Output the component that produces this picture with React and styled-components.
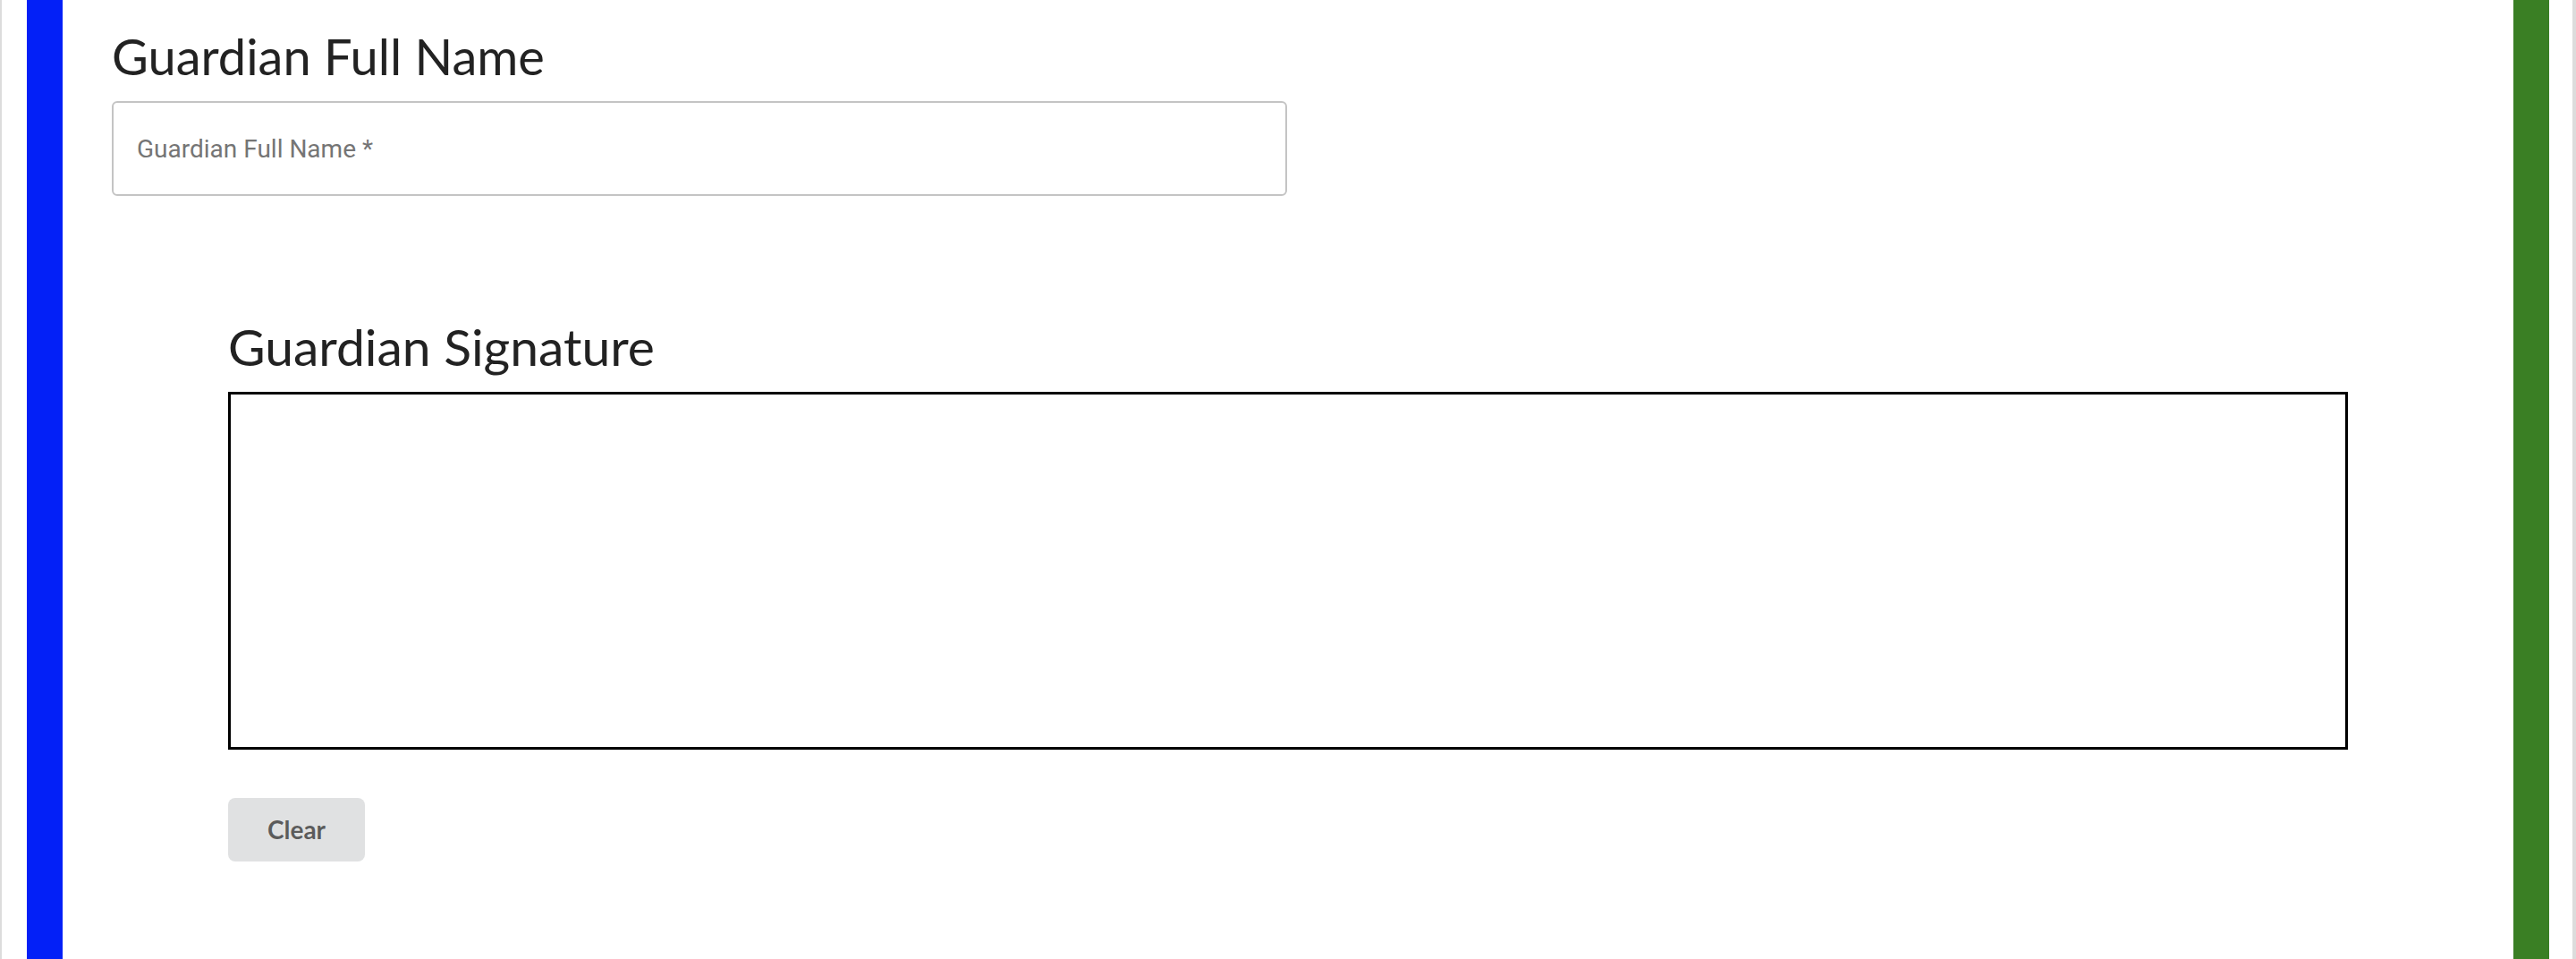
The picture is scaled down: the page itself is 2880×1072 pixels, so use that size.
import React, { useState } from "react";
import styled, { createGlobalStyle } from "styled-components";

const GlobalStyle = createGlobalStyle`
  html, body {
    margin: 0;
    padding: 0;
    background: #ffffff;
  }
  * {
    box-sizing: border-box;
  }
`;

export default function App() {
  const [name, setName] = useState("");

  return (
    <>
      <GlobalStyle />
      <Frame>
        <Panel>
          <Field>
            <Label>Guardian Full Name</Label>
            <TextInput
              placeholder="Guardian Full Name *"
              value={name}
              onChange={(e) => setName(e.target.value)}
            />
          </Field>

          <SignatureSection>
            <Label size={57}>Guardian Signature</Label>
            <SignaturePad />
            <ClearButton type="button">Clear</ClearButton>
          </SignatureSection>
        </Panel>
      </Frame>
    </>
  );
}

const Frame = styled.div`
  min-height: 1072px;
  padding: 0 26px 0 28px;
  border-left: 2px solid #dcdcdc;
  border-right: 4px solid #dcdcdc;
  display: flex;
`;

const Panel = styled.div`
  flex: 1;
  border-left: 40px solid #0320f7;
  border-right: 40px solid #3a7f24;
  padding: 29px 55px 0 55px;
  display: flex;
  flex-direction: column;
`;

const Field = styled.div`
  display: flex;
  flex-direction: column;
  gap: 17px;
  width: 1314px;
`;

const Label = styled.h2`
  margin: 0;
  font-family: Lato, "Open Sans", sans-serif;
  font-size: ${(props) => props.size || 56}px;
  font-weight: 400;
  line-height: 1.2;
  color: #222222;
`;

const TextInput = styled.input`
  height: 106px;
  width: 100%;
  padding: 0 26px;
  border: 2px solid #c4c4c4;
  border-radius: 6px;
  font-family: Roboto, "Noto Sans", sans-serif;
  font-size: 28px;
  color: #212121;
  outline: none;

  &::placeholder {
    color: #757575;
  }
`;

const SignatureSection = styled.div`
  margin: 134px 130px 0 130px;
  display: flex;
  flex-direction: column;
  align-items: flex-start;
`;

const SignaturePad = styled.div`
  margin-top: 16px;
  width: 100%;
  height: 400px;
  border: 3px solid #000000;
  background: #ffffff;
`;

const ClearButton = styled.button`
  margin-top: 54px;
  width: 153px;
  height: 71px;
  border: none;
  border-radius: 8px;
  background: #e0e1e2;
  color: rgba(0, 0, 0, 0.6);
  font-family: Lato, "Open Sans", sans-serif;
  font-size: 28px;
  font-weight: 700;
  cursor: pointer;
`;
